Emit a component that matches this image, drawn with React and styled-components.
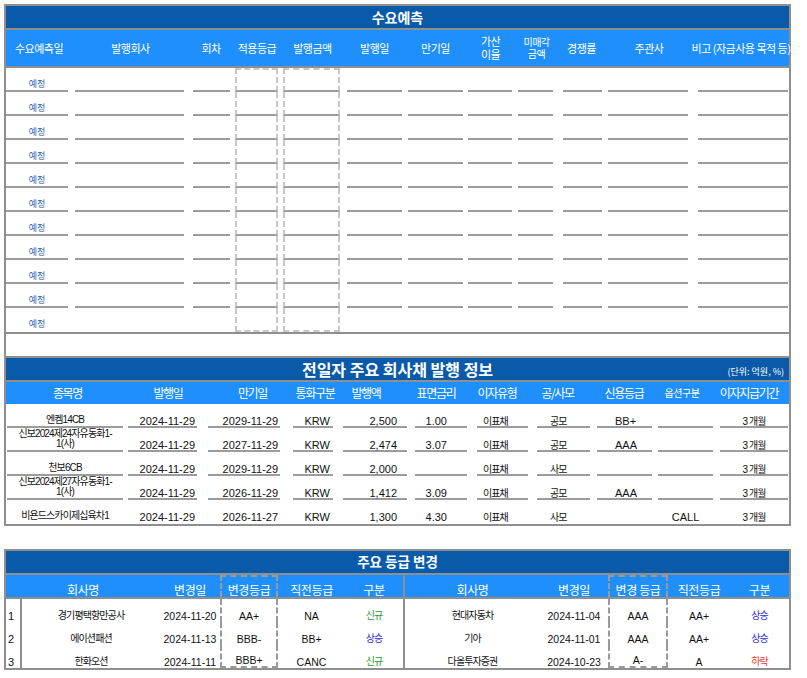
import React from 'react';
import styled, { createGlobalStyle, css } from 'styled-components';

const DARK = '#0a5aaa';
const LIGHT = '#1f8ffd';
const FRAME = '#8f8f8f';
const RULE = '#9c9c9c';
const KR = '"Noto Sans CJK KR", "Liberation Sans", sans-serif';

const GlobalStyle = createGlobalStyle`
  * { box-sizing: border-box; }
  body {
    margin: 0;
    background: #fff;
    color: #111;
    font-family: "Liberation Sans", "Noto Sans CJK KR", sans-serif;
  }
`;

const boxEdges = (box, color) =>
  box &&
  css`
    border-left: 2px dashed ${color};
    border-right: 2px dashed ${color};
    ${box === 'first' && `border-top: 2px dashed ${color};`}
    ${box === 'last' && `border-bottom: 2px dashed ${color};`}
  `;

const Page = styled.div`
  width: 791px;
  padding: 4px 0 0 4px;
`;

const Panel = styled.section`
  border: 2px solid ${FRAME};
  & + & {
    margin-top: 23px;
  }
`;

const TitleBar = styled.div`
  display: grid;
  grid-template-columns: 1fr auto 1fr;
  align-items: center;
  height: 24px;
  background: ${DARK};
  border-bottom: 2px solid ${FRAME};
  color: #fff;
  font-family: ${KR};
`;

const Title = styled.h2`
  grid-column: 2;
  margin: 0;
  font-size: ${(p) => p.$size}px;
  font-weight: 700;
  line-height: 1;
  white-space: nowrap;
`;

const Unit = styled.span`
  grid-column: 3;
  justify-self: end;
  align-self: end;
  margin: 0 5px 3px 0;
  font-size: 9px;
  line-height: 11px;
`;

const HeadRow = styled.div`
  display: grid;
  grid-template-columns: ${(p) => p.$cols};
  height: ${(p) => p.$h}px;
  background: ${LIGHT};
  border-bottom: ${(p) => (p.$ruled ? `2px solid ${FRAME}` : 'none')};
`;

const HeadCell = styled.div`
  display: flex;
  align-items: ${(p) => p.$align || 'center'};
  justify-content: center;
  min-width: 0;
  color: #fff;
  font-family: ${KR};
  font-size: ${(p) => p.$fs}px;
  letter-spacing: ${(p) => p.$ls}px;
  line-height: ${(p) => p.$lh || 13}px;
  text-align: center;
  white-space: pre;
  ${(p) => boxEdges(p.$box, '#9a9a9a')}
`;

const Body = styled.div`
  border-bottom: ${(p) => (p.$ruled ? `2px solid ${FRAME}` : 'none')};
`;

const Row = styled.div`
  display: grid;
  grid-template-columns: ${(p) => p.$cols};
  height: ${(p) => p.$h || 24}px;
`;

const Slot = styled.div`
  display: flex;
  min-width: 0;
  padding: 0 ${(p) => p.$m[1]}px 0 ${(p) => p.$m[0]}px;
`;

const Field = styled.div`
  flex: 1;
  min-width: 0;
  display: flex;
  align-items: flex-end;
  justify-content: ${(p) => p.$justify || 'center'};
  padding: 0 ${(p) => (p.$justify === 'flex-end' ? p.$pad || 0 : 0)}px 0
    ${(p) => (p.$justify === 'flex-start' ? p.$pad || 0 : 0)}px;
  border-bottom: 2px solid ${(p) => (p.$ruled ? RULE : 'transparent')};
  ${(p) => boxEdges(p.$box, '#c8c8c8')}
`;

const Planned = styled.span`
  margin-bottom: 1px;
  color: #2f68b6;
  font-family: ${KR};
  font-size: 9px;
  line-height: 11px;
`;

const Value = styled.span`
  font-size: ${(p) => (p.$ko ? 10 : 11)}px;
  letter-spacing: ${(p) => (p.$ko ? -0.9 : 0)}px;
  line-height: ${(p) => (p.$tight ? 10 : 11)}px;
  margin-bottom: ${(p) => (p.$tight ? 1 : -1)}px;
  text-align: center;
  white-space: pre;
  color: #111;
`;

const Spacer = styled.div`
  height: 24px;
  border-bottom: 2px solid ${FRAME};
`;

const Split = styled.div`
  display: grid;
  grid-template-columns: 397px 386px;
`;

const Half = styled.div`
  & + & {
    border-left: 2px solid ${FRAME};
  }
`;

const Num = styled.div`
  display: flex;
  align-items: flex-end;
  padding: 0 0 0 2px;
  border-right: 2px solid ${FRAME};
  font-size: 11px;
  line-height: 12px;
`;

const GradeCell = styled.div`
  display: flex;
  align-items: flex-end;
  justify-content: center;
  min-width: 0;
  color: ${(p) => p.$tone || '#111'};
  font-size: ${(p) => (p.$ko ? 10 : 10.5)}px;
  letter-spacing: ${(p) => (p.$ko ? -0.9 : 0)}px;
  line-height: 12px;
  white-space: nowrap;
  ${(p) => boxEdges(p.$box, '#9a9a9a')}
`;

const DEMAND_GRID = '66px 117px 44px 48px 63px 61px 61px 49px 43px 47px 88px 96px';

const demandCols = [
  { label: '수요예측일', m: [0, 4] },
  { label: '발행회사', m: [3, 5] },
  { label: '회차', m: [4, 3] },
  { label: '적용등급', m: [2, 3], dash: true },
  { label: '발행금액', m: [2, 4], dash: true },
  { label: '발행일', m: [3, 3] },
  { label: '만기일', m: [3, 3] },
  { label: '가산\n이율', m: [2, 3] },
  { label: '미매각\n금액', m: [3, 5], small: true },
  { label: '경쟁률', m: [5, 3] },
  { label: '주관사', m: [3, 5] },
  { label: '비고 (자금사용 목적 등)', m: [5, 1] },
];

const ISSUE_HEAD = '123px 78px 91px 34px 68px 72px 50px 71px 62px 54px 80px';
const ISSUE_GRID = '119px 77px 84px 52px 73px 61px 60px 61px 62px 61px 73px';

const issueCols = [
  { label: '종목명', m: [1, 2], ko: true, tight: true },
  { label: '발행일', m: [3, 5], j: 'flex-end', pad: 2 },
  { label: '만기일', m: [6, 6], j: 'flex-end', pad: 2 },
  { label: '통화구분', m: [7, 5], j: 'flex-end', pad: 3 },
  { label: '발행액', m: [5, 4], j: 'flex-end', pad: 10 },
  { label: '표면금리', m: [4, 5], j: 'flex-end', pad: 20 },
  { label: '이자유형', m: [5, 4], j: 'flex-start', pad: 6, ko: true },
  { label: '공/사모', m: [5, 3], j: 'flex-start', pad: 13, ko: true },
  { label: '신용등급', m: [4, 3], j: 'flex-start', pad: 18 },
  { label: '옵션구분', m: [3, 3], small: true },
  { label: '이자지급기간', m: [4, 1], ko: true },
];

const issues = [
  ['엔켐14CB', '2024-11-29', '2029-11-29', 'KRW', '2,500', '1.00', '이표채', '공모', 'BB+', '', '3 개월'],
  ['신보2024제24자유동화1-\n1(사)', '2024-11-29', '2027-11-29', 'KRW', '2,474', '3.07', '이표채', '공모', 'AAA', '', '3 개월'],
  ['천보6CB', '2024-11-29', '2029-11-29', 'KRW', '2,000', '', '이표채', '사모', '', '', '3 개월'],
  ['신보2024제27자유동화1-\n1(사)', '2024-11-29', '2026-11-29', 'KRW', '1,412', '3.09', '이표채', '공모', 'AAA', '', '3 개월'],
  ['비욘드스카이제십육차1', '2024-11-29', '2026-11-27', 'KRW', '1,300', '4.30', '이표채', '사모', '', 'CALL', '3 개월'],
];

const TONES = { 신규: '#1f9a3c', 상승: '#2b2bd0', 하락: '#ee3a3a' };

const gradeLeft = [
  ['경기평택항만공사', '2024-11-20', 'AA+', 'NA', '신규'],
  ['에이션패션', '2024-11-13', 'BBB-', 'BB+', '상승'],
  ['한화오션', '2024-11-11', 'BBB+', 'CANC', '신규'],
];

const gradeRight = [
  ['현대자동차', '2024-11-04', 'AAA', 'AA+', '상승'],
  ['기아', '2024-11-01', 'AAA', 'AA+', '상승'],
  ['다올투자증권', '2024-10-23', 'A-', 'A', '하락'],
];

function GradeTable({ heads, headCols, rowCols, rows, numbered }) {
  return (
    <Half>
      <HeadRow $cols={headCols} $h={24} $ruled>
        {heads.map((h, i) => (
          <HeadCell key={h} $fs={12} $ls={-0.4} $lh={15} $align="flex-end" $box={i === 2 ? 'first' : null}>
            {h}
          </HeadCell>
        ))}
      </HeadRow>
      {rows.map((row, r) => (
        <Row key={r} $cols={rowCols} $h={23}>
          {numbered && <Num>{r + 1}</Num>}
          {row.map((v, i) => (
            <GradeCell
              key={i}
              $ko={i === 0 || i === 4}
              $tone={i === 4 ? TONES[v] : null}
              $box={i === 2 ? (r === rows.length - 1 ? 'last' : 'mid') : null}
            >
              {v}
            </GradeCell>
          ))}
        </Row>
      ))}
    </Half>
  );
}

export default function App() {
  return (
    <>
      <GlobalStyle />
      <Page>
        <Panel>
          <TitleBar>
            <Title $size={14}>수요예측</Title>
          </TitleBar>
          <HeadRow $cols={DEMAND_GRID} $h={38} $ruled>
            {demandCols.map((c) => (
              <HeadCell key={c.label} $fs={c.small ? 10 : 11} $ls={-0.5} $lh={c.small ? 12 : 13}>
                {c.label}
              </HeadCell>
            ))}
          </HeadRow>
          <Body $ruled>
            {Array.from({ length: 11 }, (_, r) => (
              <Row key={r} $cols={DEMAND_GRID}>
                {demandCols.map((c, i) => (
                  <Slot key={i} $m={c.m}>
                    <Field
                      $ruled={r < 10}
                      $box={c.dash ? (r === 0 ? 'first' : r === 10 ? 'last' : 'mid') : null}
                    >
                      {i === 0 && <Planned>예정</Planned>}
                    </Field>
                  </Slot>
                ))}
              </Row>
            ))}
          </Body>
          <Spacer />
          <TitleBar>
            <Title $size={16}>전일자 주요 회사채 발행 정보</Title>
            <Unit>(단위: 억원, %)</Unit>
          </TitleBar>
          <HeadRow $cols={ISSUE_HEAD} $h={22}>
            {issueCols.map((c) => (
              <HeadCell key={c.label} $fs={c.small ? 10 : 12} $ls={c.small ? -0.5 : -1.3} $lh={14}>
                {c.label}
              </HeadCell>
            ))}
          </HeadRow>
          <Body>
            {issues.map((row, r) => (
              <Row key={r} $cols={ISSUE_GRID}>
                {issueCols.map((c, i) => (
                  <Slot key={i} $m={c.m}>
                    <Field $ruled={r < issues.length - 1} $justify={c.j} $pad={c.pad}>
                      {row[i] && (
                        <Value $ko={c.ko} $tight={c.tight}>
                          {row[i]}
                        </Value>
                      )}
                    </Field>
                  </Slot>
                ))}
              </Row>
            ))}
          </Body>
        </Panel>

        <Panel>
          <TitleBar>
            <Title $size={13.5}>주요 등급 변경</Title>
          </TitleBar>
          <Split>
            <GradeTable
              heads={['회사명', '변경일', '변경등급', '직전등급', '구분']}
              headCols="154px 60px 58px 67px 58px"
              rowCols="16px 138px 60px 58px 67px 58px"
              rows={gradeLeft}
              numbered
            />
            <GradeTable
              heads={['회사명', '변경일', '변경 등급', '직전등급', '구분']}
              headCols="135px 68px 60px 62px 59px"
              rowCols="135px 68px 60px 62px 59px"
              rows={gradeRight}
            />
          </Split>
        </Panel>
      </Page>
    </>
  );
}
